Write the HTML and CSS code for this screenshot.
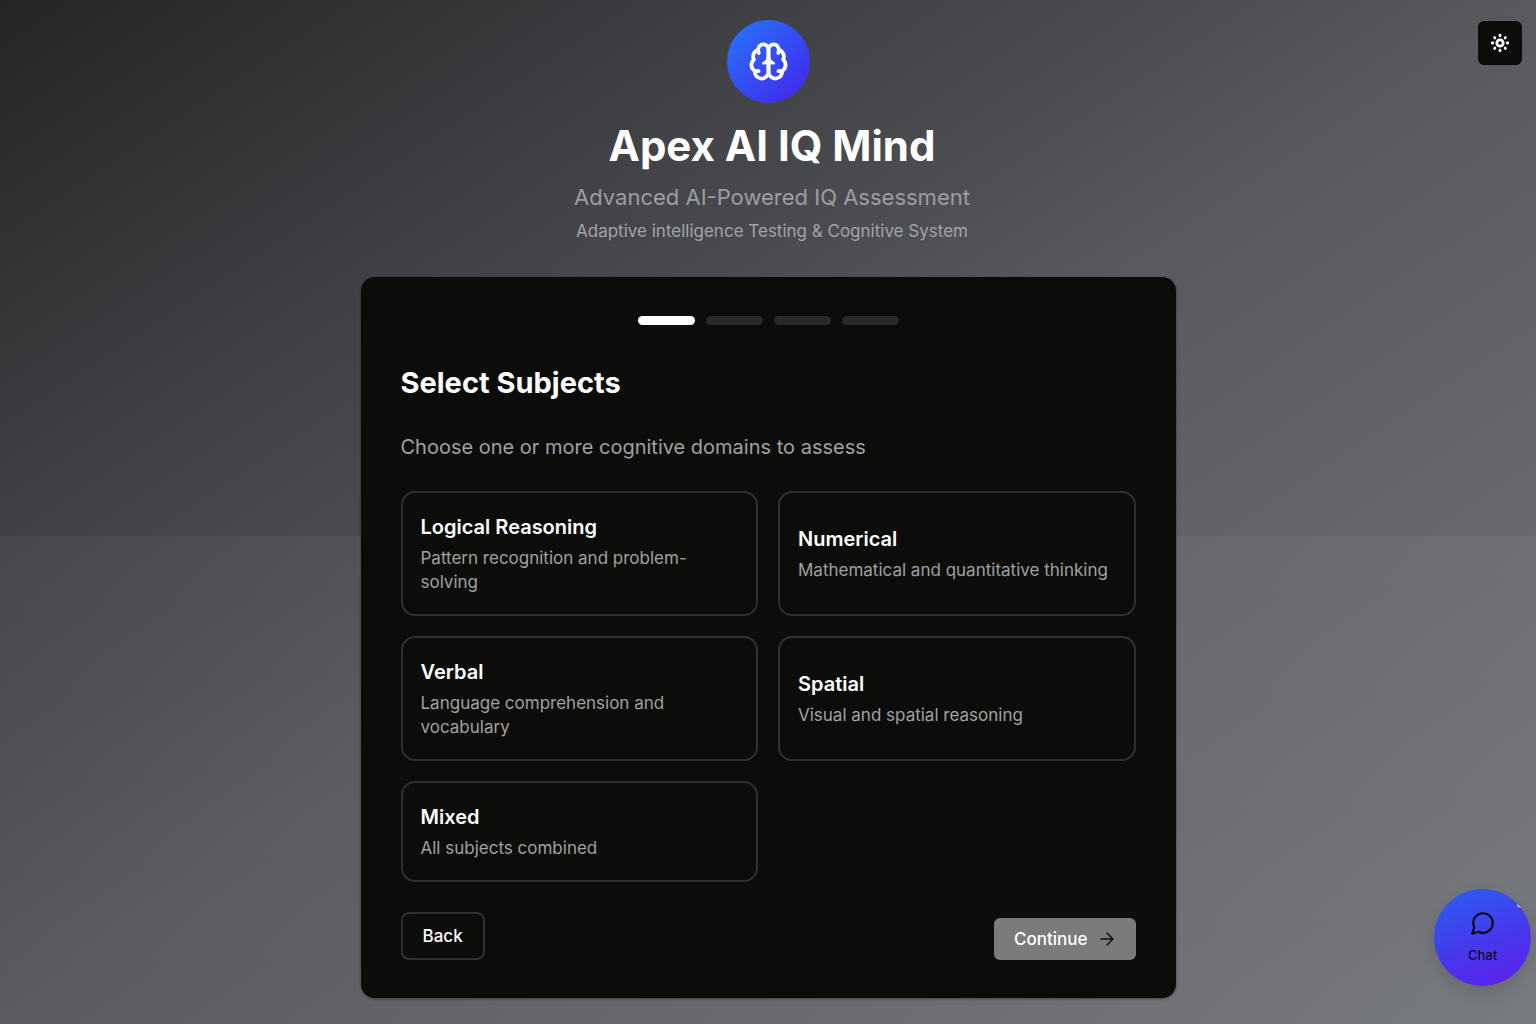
FILE: index.html
```html
<!DOCTYPE html>
<html lang="en">
<head>
    <meta charset="utf-8">
    <title>Apex AI IQ Mind</title>
    <meta name="viewport" content="width=device-width,initial-scale=1">
    <link rel="stylesheet" href="styles.css">
</head>
<body>
<div class="page">
    <header class="header">
        <div class="logo">
            <svg class="logo-icon" viewBox="0 0 24 24" aria-hidden="true">
                <path d="M12 5a3 3 0 1 0-5.997.125 4 4 0 0 0-2.526 5.77 4 4 0 0 0 .556 6.588A4 4 0 1 0 12 18Z"/>
                <path d="M12 5a3 3 0 1 1 5.997.125 4 4 0 0 1 2.526 5.77 4 4 0 0 1-.556 6.588A4 4 0 1 1 12 18Z"/>
                <path class="logo-arrow" d="M15 13Q12.600 12 12 9.500Q11.400 12 9 13L12 12.600Z"/>
                <path d="M17.700 7a3 3 0 0 0 .299-1.875"/>
                <path d="M6.003 5.125A3 3 0 0 0 6.300 7"/>
                <path d="M6.200 17.600a4 4 0 0 1-2.167-.116"/>
                <path d="M19.967 17.484A4 4 0 0 1 17.800 17.600"/>
            </svg>
        </div>
        <div class="header-text">
            <h1 class="title">Apex AI IQ Mind</h1>
            <p class="subtitle">Advanced AI-Powered IQ Assessment</p>
            <p class="tagline">Adaptive intelligence Testing &amp; Cognitive System</p>
        </div>
    </header>

    <main class="card">
        <!-- step 1 of 4 -->
        <div class="steps">
            <span class="step active"></span>
            <span class="step"></span>
            <span class="step"></span>
            <span class="step"></span>
        </div>

        <h2 class="card-title">Select Subjects</h2>
        <p class="card-text">Choose one or more cognitive domains to assess</p>

        <div class="subjects">
            <button type="button" class="subject">
                <span class="subject-name">Logical Reasoning</span>
                <span class="subject-desc">Pattern recognition and problem-solving</span>
            </button>
            <button type="button" class="subject">
                <span class="subject-name">Numerical</span>
                <span class="subject-desc">Mathematical and quantitative thinking</span>
            </button>
            <button type="button" class="subject">
                <span class="subject-name">Verbal</span>
                <span class="subject-desc">Language comprehension and vocabulary</span>
            </button>
            <button type="button" class="subject">
                <span class="subject-name">Spatial</span>
                <span class="subject-desc">Visual and spatial reasoning</span>
            </button>
            <button type="button" class="subject">
                <span class="subject-name">Mixed</span>
                <span class="subject-desc">All subjects combined</span>
            </button>
        </div>

        <div class="actions">
            <button type="button" class="btn-back">Back</button>
            <button type="button" class="btn-continue">
                Continue
                <svg class="arrow" viewBox="0 0 24 24" aria-hidden="true"><path d="M4 12h16M12 4l8 8-8 8"/></svg>
            </button>
        </div>
    </main>
</div>

<button type="button" class="theme-toggle" aria-label="Toggle theme">
    <svg class="sun" viewBox="0 0 20 20" aria-hidden="true">
        <circle cx="10" cy="10" r="3.200"/>
        <path d="M10 2.200v.6M10 17.200v.6M2.200 10h.6M17.200 10h.6M4.600 4.600l.3.3M15.100 15.100l.3.3M4.600 15.400l.3-.3M15.100 4.900l.3-.3"/>
    </svg>
</button>

<button type="button" class="chat">
    <svg class="chat-icon" viewBox="0 0 24 24" aria-hidden="true"><path d="M7.900 20A9 9 0 1 0 4 16.100L2 22Z"/></svg>
    Chat
    <svg class="chat-glint" viewBox="0 0 8 8" aria-hidden="true"><path d="M0 1Q4 2 6 6L2 4Z"/></svg>
</button>
</body>
</html>
```
FILE: styles.css
```css
* {
    box-sizing: border-box;
}

body {
    margin: 0;
    font-family: Inter, "Liberation Sans", sans-serif;
    color: #fff;
    background: #595a5e;
}

h1, h2, p {
    margin: 0;
}

button {
    font-family: inherit;
    color: inherit;
    cursor: pointer;
}

svg {
    fill: none;
    stroke: currentColor;
    stroke-width: 2;
    stroke-linecap: round;
    stroke-linejoin: round;
}

.page {
    min-height: 100vh;
    padding: 20px 16px 25px;
    /* the lighter band starts just below the middle of the page */
    background:
        linear-gradient(rgba(255, 255, 255, 0.04), rgba(255, 255, 255, 0.01)) bottom / 100% 47.7% no-repeat,
        linear-gradient(to bottom right, #232527 0%, #313234 12%, #3f4043 25%, #4b4c50 38%, #595a5e 50%, #68696d 75%, #76797d 100%);
}

/* header */
.header {
    display: flex;
    flex-direction: column;
    align-items: center;
    text-align: center;
}

.logo {
    display: flex;
    align-items: center;
    justify-content: center;
    width: 83px;
    height: 83px;
    border-radius: 50%;
    background: linear-gradient(135deg, #2b6bf8 15%, #3f2fee 85%);
}

.logo-icon {
    width: 41px;
    height: 41px;
    stroke-width: 2.2;
}

.logo-arrow {
    fill: currentColor;
    stroke-width: 1.6;
}

.header-text {
    padding: 17px 0 34px 8px;
}

.title {
    font-size: 42px;
    line-height: 52px;
    font-weight: 700;
}

.subtitle {
    margin-top: 9px;
    font-size: 22px;
    line-height: 32px;
    color: #9d9d9f;
}

.tagline {
    margin-top: 6px;
    font-size: 17px;
    line-height: 24px;
    color: #a3a3a5;
}

/* card */
.card {
    max-width: 815px;
    margin: 0 auto;
    padding: 39px 40px 38px;
    border-radius: 14px;
    background: #0c0c0b;
    box-shadow: 0 1px 3px rgba(0, 0, 0, 0.4);
}

.steps {
    display: flex;
    justify-content: center;
    gap: 11px;
}

.step {
    width: 57px;
    height: 9px;
    border-radius: 5px;
    background: #292928;
}

.step.active {
    background: #fff;
}

.card-title {
    margin-top: 38px;
    font-size: 29px;
    line-height: 40px;
    font-weight: 700;
}

.card-text {
    margin-top: 30px;
    font-size: 20px;
    line-height: 28px;
    color: #a1a1a1;
}

.subjects {
    display: grid;
    grid-template-columns: 1fr 1fr;
    gap: 20px;
    margin-top: 30px;
}

.subject {
    display: flex;
    flex-direction: column;
    justify-content: center;
    gap: 5px;
    padding: 20px 18px;
    border: 2px solid #303030;
    border-radius: 14px;
    background: transparent;
    text-align: left;
}

.subject-name {
    font-size: 20px;
    line-height: 28px;
    font-weight: 600;
}

.subject-desc {
    font-size: 17px;
    line-height: 24px;
    color: #a1a1a1;
}

.actions {
    display: flex;
    justify-content: space-between;
    align-items: flex-end;
    margin-top: 30px;
}

.btn-back,
.btn-continue {
    font-size: 17px;
    line-height: 24px;
    font-weight: 500;
}

.btn-back {
    padding: 10px 20px;
    border: 2px solid #303030;
    border-radius: 8px;
    background: transparent;
}

.btn-continue {
    display: flex;
    align-items: center;
    gap: 10px;
    padding: 9px 20px;
    border: 0;
    border-radius: 6px;
    background: #7b7b7b;
}

.arrow {
    width: 18px;
    height: 18px;
    color: #111;
}

/* floating buttons */
.theme-toggle {
    position: fixed;
    top: 21px;
    right: 14px;
    display: flex;
    align-items: center;
    justify-content: center;
    width: 44px;
    height: 44px;
    padding: 0;
    border: 0;
    border-radius: 6px;
    background: #0c0c0b;
}

.sun {
    width: 20px;
    height: 20px;
    stroke-width: 2.8;
}

.chat {
    position: fixed;
    right: 5px;
    bottom: 38px;
    display: flex;
    flex-direction: column;
    align-items: center;
    justify-content: center;
    gap: 9px;
    width: 97px;
    height: 97px;
    padding: 0;
    border: 0;
    border-radius: 50%;
    background: linear-gradient(160deg, #2d5cf2 5%, #4738ec 55%, #5c22ec 95%);
    box-shadow: 0 6px 16px rgba(0, 0, 0, 0.12);
    font-size: 13px;
    line-height: 20px;
    font-weight: 500;
    color: #0c0c14;
}

.chat-icon {
    width: 26px;
    height: 26px;
}

.chat-glint {
    position: absolute;
    top: 14px;
    right: 8px;
    width: 7px;
    height: 7px;
    fill: #c3ccee;
    stroke: none;
}
```
